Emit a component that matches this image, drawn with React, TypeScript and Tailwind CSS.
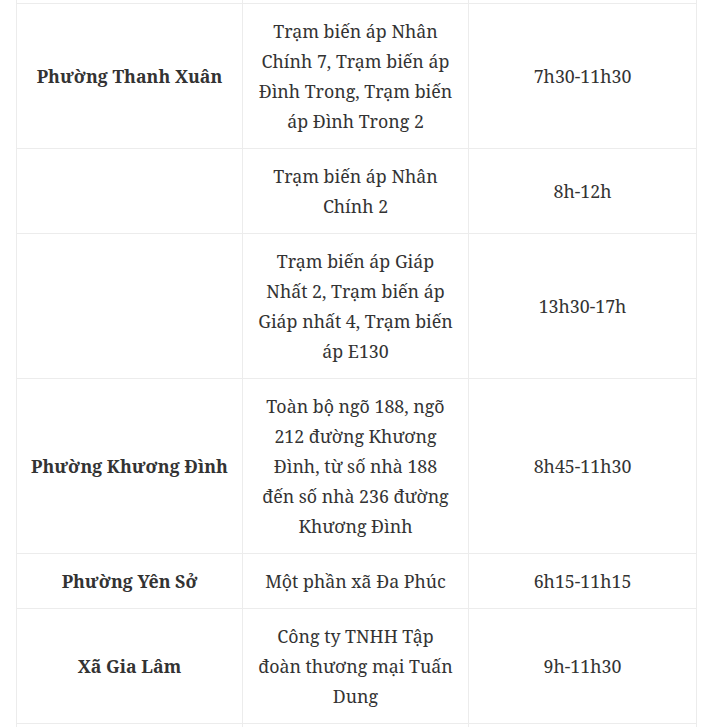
const rows: { area: string; place: string[]; time: string }[] = [
  {
    area: "Phường Thanh Xuân",
    place: ["Trạm biến áp Nhân", "Chính 7, Trạm biến áp", "Đình Trong, Trạm biến", "áp Đình Trong 2"],
    time: "7h30-11h30",
  },
  { area: "", place: ["Trạm biến áp Nhân", "Chính 2"], time: "8h-12h" },
  {
    area: "",
    place: ["Trạm biến áp Giáp", "Nhất 2, Trạm biến áp", "Giáp nhất 4, Trạm biến", "áp E130"],
    time: "13h30-17h",
  },
  {
    area: "Phường Khương Đình",
    place: ["Toàn bộ ngõ 188, ngõ", "212 đường Khương", "Đình, từ số nhà 188", "đến số nhà 236 đường", "Khương Đình"],
    time: "8h45-11h30",
  },
  { area: "Phường Yên Sở", place: ["Một phần xã Đa Phúc"], time: "6h15-11h15" },
  {
    area: "Xã Gia Lâm",
    place: ["Công ty TNHH Tập", "đoàn thương mại Tuấn", "Dung"],
    time: "9h-11h30",
  },
];

export default function App() {
  return (
    <div
      className="h-[727px] w-[712px] overflow-hidden bg-white text-[#333] text-[17.8px] leading-[30px]"
      style={{ fontFamily: '"Noto Serif", "DejaVu Serif", serif' }}
    >
      <table className="ml-4 w-[680px] table-fixed border-collapse">
        <colgroup>
          <col className="w-[226px]" />
          <col className="w-[226px]" />
          <col className="w-[228px]" />
        </colgroup>
        <tbody>
          {/* tail of the row above */}
          <tr className="h-[3px]">
            <td className="border border-t-0 border-[#ececec] p-0" />
            <td className="border border-t-0 border-[#ececec] p-0" />
            <td className="border border-t-0 border-[#ececec] p-0" />
          </tr>
          {rows.map((r, i) => (
            <tr key={i}>
              <td className="border border-[#ececec] px-1 py-3 text-center align-middle font-bold whitespace-nowrap">
                {r.area}
              </td>
              <td className="border border-[#ececec] px-1 py-3 text-center align-middle">
                {r.place.map((l, j) => (
                  <div key={j} className="whitespace-nowrap">
                    {l}
                  </div>
                ))}
              </td>
              <td className="border border-[#ececec] px-3 py-3 text-center align-middle">
                {r.time}
              </td>
            </tr>
          ))}
          <tr className="h-[30px]">
            <td className="border border-[#ececec] p-0" />
            <td className="border border-[#ececec] p-0" />
            <td className="border border-[#ececec] p-0" />
          </tr>
        </tbody>
      </table>
    </div>
  );
}
